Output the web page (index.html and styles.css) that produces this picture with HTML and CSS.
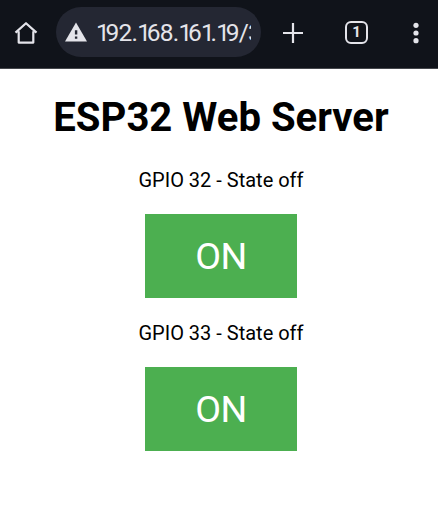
FILE: index.html
```html
<!DOCTYPE html>
<html lang="en">
<head>
<meta charset="utf-8">
<title>ESP32 Web Server</title>
<link rel="stylesheet" href="styles.css">
</head>
<body>
<header class="toolbar">
  <svg class="home" width="24" height="24" viewBox="0 0 24 24"><path d="M4.7 10.2V21.6H19.3V10.2M1.5 11.6 12 2.2 22.5 11.6" /></svg>
  <div class="address">
    <svg class="warning" width="24" height="22" viewBox="0 0 24 22"><path d="M12 1.5 23 20.5H1Z"/><path class="mark" d="M10.9 9.3h2.4v4.3h-2.4zM10.9 15.6h2.4v2.2h-2.4z"/></svg>
    <span class="url"><i>1</i>92.<i>1</i>68.<i>1</i>6<i>1</i>.<i>1</i>9/3</span>
  </div>
  <svg class="plus" width="22" height="22" viewBox="0 0 22 22"><path d="M11 1V21M1 11H21"/></svg>
  <div class="tabs">1</div>
  <svg class="more" width="6" height="22" viewBox="0 0 6 22"><circle cx="3" cy="3.3" r="2.6"/><circle cx="3" cy="11" r="2.6"/><circle cx="3" cy="18.7" r="2.6"/></svg>
</header>
<main class="page">
  <h1 class="title">ESP32 Web Server</h1>
  <p class="state">GPIO 32 - State off</p>
  <button class="button">ON</button>
  <p class="state">GPIO 33 - State off</p>
  <button class="button">ON</button>
</main>
</body>
</html>
```
FILE: styles.css
```css
* { box-sizing: border-box; }
body { margin: 0; height: 528px; background: #fff; font-family: Roboto, sans-serif; color: #000; overflow: hidden; }
.toolbar { display: flex; align-items: center; height: 69px; padding: 0 19px 4px 14px; background: #10131a; border-bottom: 1px solid #45474c; color: #e4e4ea; }
.home, .plus { fill: none; stroke: #e4e4ea; stroke-width: 2.2; stroke-linejoin: round; flex: none; }
.home { margin-top: 1px; }
.address { display: flex; align-items: center; width: 205px; height: 50px; margin-left: 18px; padding: 0 10px 0 8px; border-radius: 25px; background: #242733; flex: none; }
.warning { fill: #e4e4ea; flex: none; margin-top: -1px; }
.warning .mark { fill: #242733; }
.url { margin: 2px 0 0 8px; width: 155px; overflow: hidden; white-space: nowrap; font-size: 24.5px; line-height: 30px; letter-spacing: -0.8px; }
.url i { font-style: normal; letter-spacing: -4.2px; }
.plus { margin-left: 21px; margin-top: 1px; }
.tabs { display: flex; align-items: center; justify-content: center; width: 23px; height: 23px; margin: 1px 0 0 41px; border: 2px solid #e4e4ea; border-radius: 6px; font-size: 15px; font-weight: 700; line-height: 19px; flex: none; }
.more { margin-left: auto; margin-top: 1px; fill: #e4e4ea; flex: none; }
.page { display: flex; flex-direction: column; align-items: center; padding: 25px 0 0 4px; }
.title { margin: 0; font-size: 40.1px; line-height: 48px; font-weight: 700; white-space: nowrap; }
.state { margin: 26px 0 22px; font-size: 20px; line-height: 24px; }
.button { width: 152px; height: 84px; padding: 1px 0 0; border: 0; background: #4caf50; color: #fff; font: 400 37.5px/83px Roboto, sans-serif; letter-spacing: -0.5px; }
.button + .state { margin: 23px 0 22px; }
```
